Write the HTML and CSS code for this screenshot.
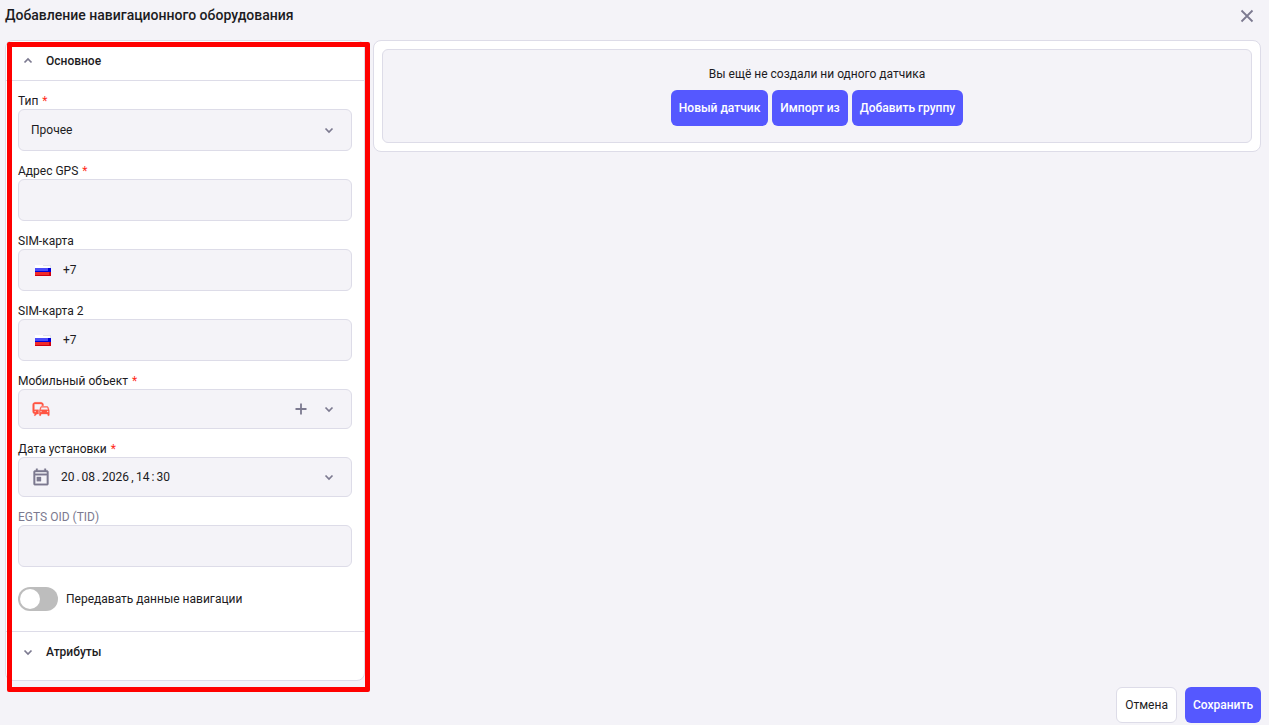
FILE: index.html
```html
<!DOCTYPE html>
<html lang="ru">
<head>
<meta charset="utf-8">
<meta name="viewport" content="width=device-width, initial-scale=1">
<title>Добавление навигационного оборудования</title>
<link rel="stylesheet" href="styles.css">
</head>
<body>
<svg class="sprite" aria-hidden="true">
  <symbol id="chevron-down" viewBox="0 0 16 16"><path d="M4.500 6.500l3.500 3.500 3.500-3.500" fill="none" stroke="currentColor" stroke-width="1.700"/></symbol>
  <symbol id="flag-ru" viewBox="0 0 16 11">
    <path fill="#fff" d="M0 0h16v4H0z"/><path fill="#e4e4ea" d="M8 0h8v1H8zM15 1h1v2h-1z"/>
    <path fill="#4a4af8" d="M0 3h16v4H0z"/><path fill="#0000d8" d="M0 6h16v1H0zM13 3h3v4h-3z"/>
    <path fill="#f02a2a" d="M0 7h16v4H0z"/><path fill="#d00010" d="M0 10h16v1H0zM14 7h2v4h-2z"/>
  </symbol>
</svg>
<div class="page">
  <header class="topbar">
    <h1 class="title">Добавление навигационного оборудования</h1>
    <button class="icon-button" type="button" aria-label="Закрыть">
      <svg width="16" height="16" viewBox="0 0 16 16"><path d="M2.500 2.500l11 11M13.500 2.500l-11 11" stroke="currentColor" stroke-width="1.800" fill="none"/></svg>
    </button>
  </header>

  <main class="content">
    <form class="card sidebar" id="equipment">
      <button class="section-head" type="button" aria-expanded="true">
        <svg class="chevron chevron-up"><use href="#chevron-down"/></svg>Основное
      </button>
      <div class="section-body">
        <div class="field">
          <label class="label" for="type">Тип <span class="required">*</span></label>
          <div class="control">
            <select class="input" id="type"><option>Прочее</option></select>
            <svg class="chevron"><use href="#chevron-down"/></svg>
          </div>
        </div>
        <div class="field">
          <label class="label" for="gps">Адрес GPS <span class="required">*</span></label>
          <div class="control"><input class="input" id="gps" type="text"></div>
        </div>
        <div class="field">
          <label class="label" for="sim1">SIM-карта</label>
          <div class="control control-phone">
            <svg class="flag"><use href="#flag-ru"/></svg>
            <input class="input" id="sim1" type="tel" value="+7">
          </div>
        </div>
        <div class="field">
          <label class="label" for="sim2">SIM-карта 2</label>
          <div class="control control-phone">
            <svg class="flag"><use href="#flag-ru"/></svg>
            <input class="input" id="sim2" type="tel" value="+7">
          </div>
        </div>
        <div class="field">
          <label class="label" for="object">Мобильный объект <span class="required">*</span></label>
          <div class="control control-compact">
            <svg class="object-icon" viewBox="0 0 24 24"><path fill="currentColor" stroke="currentColor" stroke-width=".4" d="M12 4H5C3.340 4 2 5.340 2 7v8c0 1.660 1.340 3 3 3l-1 1v1h1l2-2.030L9 18v-5H4V5.980L13 6v2h2V7c0-1.660-1.340-3-3-3zM5 14c.55 0 1 .45 1 1s-.45 1-1 1-1-.45-1-1 .45-1 1-1zm15.570-4.340c-.14-.4-.52-.66-.97-.66h-7.190c-.46 0-.83.26-.98.66L10 13.770l.010 5.510c0 .38.310.72.690.72h.620c.380 0 .680-.380.680-.760V18h8v1.240c0 .38.310.76.690.76h.610c.380 0 .690-.340.690-.720l.010-1.370v-4.140l-1.430-4.110zM12.410 10h7.190l1.030 3h-9.250l1.030-3zM12 16c-.550 0-1-.450-1-1s.45-1 1-1 1 .45 1 1-.45 1-1 1zm8 0c-.550 0-1-.450-1-1s.45-1 1-1 1 .45 1 1-.45 1-1 1z"/></svg>
            <select class="input" id="object"><option value=""></option></select>
            <button class="icon-button" type="button" aria-label="Создать объект">
              <svg width="16" height="16" viewBox="0 0 16 16"><path d="M8 2.500v11M2.500 8h11" stroke="currentColor" stroke-width="1.800" fill="none"/></svg>
            </button>
            <svg class="chevron"><use href="#chevron-down"/></svg>
          </div>
        </div>
        <div class="field">
          <span class="label" id="date-label">Дата установки <span class="required">*</span></span>
          <div class="control control-compact control-date" role="group" aria-labelledby="date-label">
            <svg class="calendar-icon" viewBox="0 0 24 24"><path fill="currentColor" stroke="currentColor" stroke-width=".4" d="M19 4h-1V2h-2v2H8V2H6v2H5c-1.110 0-1.990.9-1.990 2L3 20c0 1.100.89 2 2 2h14c1.100 0 2-.9 2-2V6c0-1.100-.9-2-2-2zm0 16H5V10h14v10zm0-12H5V6h14v2zM7 12h5v5H7z"/></svg>
            <time class="date" datetime="2026-08-20T14:30">20<span class="sep">.</span>08<span class="sep">.</span>2026<span class="sep">,</span>14<span class="sep">:</span>30</time>
            <button class="icon-button" type="button" aria-label="Выбрать дату"><svg class="chevron"><use href="#chevron-down"/></svg></button>
          </div>
        </div>
        <div class="field">
          <label class="label label-muted" for="egts">EGTS OID (TID)</label>
          <div class="control"><input class="input" id="egts" type="text"></div>
        </div>
        <label class="switch-row"><input class="switch" type="checkbox" role="switch">Передавать данные навигации</label>
      </div>
      <button class="section-head section-head-closed" type="button" aria-expanded="false">
        <svg class="chevron"><use href="#chevron-down"/></svg>Атрибуты
      </button>
      <div class="highlight"></div>
    </form>

    <section class="card sensors">
      <div class="empty">
        <p class="empty-text">Вы ещё не создали ни одного датчика</p>
        <div class="actions">
          <button class="button button-primary" type="button">Новый датчик</button>
          <button class="button button-primary" type="button">Импорт из</button>
          <button class="button button-primary" type="button">Добавить группу</button>
        </div>
      </div>
    </section>
  </main>

  <footer class="footer">
    <button class="button button-plain" type="button">Отмена</button>
    <button class="button button-primary" type="submit" form="equipment">Сохранить</button>
  </footer>
</div>
</body>
</html>
```
FILE: styles.css
```css
* { box-sizing: border-box; }

body {
  margin: 0;
  background: #f4f3f8;
  color: #1c1b22;
  font: 12px/16px Roboto, "Liberation Sans", sans-serif;
}

button, input, select {
  margin: 0;
  padding: 0;
  border: 0;
  background: none;
  color: inherit;
  font: inherit;
}

.sprite { position: absolute; width: 0; height: 0; }

.page {
  display: flex;
  flex-direction: column;
  min-height: 100vh;
  padding: 0 8px 2px 5px;
}

.topbar {
  display: flex;
  align-items: center;
  justify-content: space-between;
  height: 32px;
  padding-right: 6px;
}

.title { margin: 0; font-size: 14px; line-height: 20px; font-weight: 500; padding-bottom: 2px; }

.icon-button { display: flex; color: #7c7a90; }

.content {
  display: grid;
  grid-template-columns: 360px minmax(0, 1fr);
  align-items: start;
  gap: 8px;
  flex: 1;
  padding: 8px 0 6px;
}

.card {
  border: 1px solid #dddce8;
  border-radius: 8px;
  background: #fff;
}

.sidebar { position: relative; }

.section-head {
  display: flex;
  align-items: center;
  gap: 10px;
  width: 100%;
  height: 40px;
  padding-left: 14px;
  border-bottom: 1px solid #dddce8;
  font-weight: 500;
}

.section-head-closed {
  height: 41px;
  margin-bottom: 8px;
  border-top: 1px solid #dddce8;
  border-bottom: 0;
}

.chevron { flex: none; width: 16px; height: 16px; color: #7c7a90; }
.chevron-up { transform: rotate(180deg); }

.section-body {
  display: flex;
  flex-direction: column;
  gap: 12px;
  padding: 12px 12px 20px;
}

.label { display: block; }
.label-muted { color: #7c7a90; }
.required { margin-left: 1px; color: #ff2a1a; }

.control {
  display: flex;
  align-items: center;
  gap: 12px;
  height: 42px;
  padding: 0 14px 0 12px;
  border: 1px solid #dddce8;
  border-radius: 6px;
  background: #f4f3f8;
}

.control-compact { height: 40px; }
.control-phone { padding-left: 16px; }
.control-date { gap: 10px; }

.input {
  flex: 1;
  min-width: 0;
  height: 100%;
  outline: 0;
  appearance: none;
}

.flag { flex: none; width: 16px; height: 11px; }
.object-icon { flex: none; width: 20px; height: 20px; color: #ff5543; }
.calendar-icon { flex: none; width: 20px; height: 20px; color: #7c7a90; }

.date { flex: 1; }
.sep { display: inline-block; width: 7px; text-align: center; }

.switch-row {
  display: flex;
  align-items: center;
  gap: 8px;
  padding-top: 8px;
}

.switch {
  width: 40px;
  height: 24px;
  padding: 2px;
  border-radius: 12px;
  background: #bdbdbd;
  appearance: none;
}

.switch::before {
  content: "";
  display: block;
  width: 20px;
  height: 20px;
  border-radius: 50%;
  background: #fff;
}

.switch:checked { background: #5558ff; }
.switch:checked::before { margin-left: auto; }

.highlight {
  position: absolute;
  inset: 1px -6px -12px 1px;
  border: 5px solid #f00;
  border-radius: 2px;
  pointer-events: none;
}

.sensors { padding: 8px; }

.empty {
  display: flex;
  flex-direction: column;
  align-items: center;
  gap: 8px;
  padding: 16px;
  border: 1px solid #dddce8;
  border-radius: 6px;
  background: #f4f3f8;
}

.empty-text { margin: 0; }

.actions { display: flex; flex-wrap: wrap; gap: 4px; }

.button {
  height: 36px;
  padding: 0 8px;
  border-radius: 6px;
}

.button-primary { background: #5558ff; color: #fff; font-weight: 500; }
.button-plain { border: 1px solid #dddce8; background: #fff; }

.footer { display: flex; justify-content: flex-end; gap: 8px; }
```
